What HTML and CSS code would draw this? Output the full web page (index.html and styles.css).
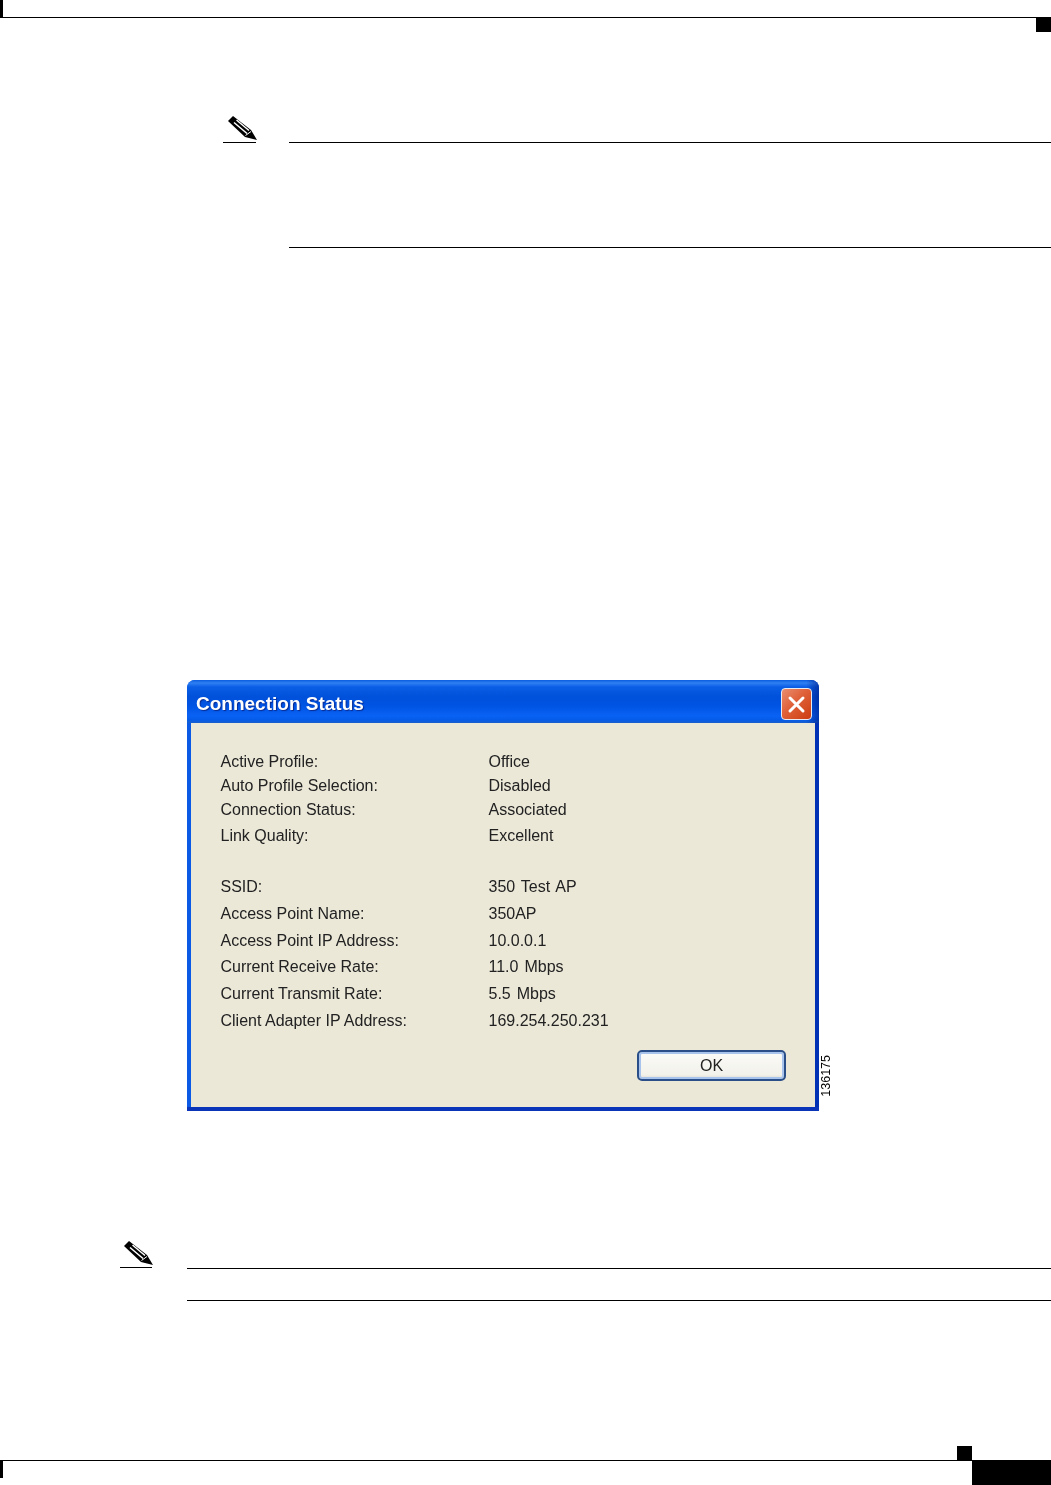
FILE: index.html
```html
<!DOCTYPE html>
<html lang="en">
<head>
<meta charset="utf-8">
<title>Connection Status</title>
<link rel="stylesheet" href="styles.css">
</head>
<body>
<div class="page">
  <header class="head">
    <div class="head-line"></div>
    <div class="head-square"></div>
  </header>

  <section class="note note-first">
    <div class="note-icon">
      <svg class="pencil" width="30" height="25" viewBox="0 0 30 25"><polygon points="0,5 5,0 23,14 29,24 17,21" fill="#000"/><path d="M6 6.500 L19 17.500 M8.500 4 L21 14.500" stroke="#fff" stroke-width="1.500" fill="none"/><path d="M17.500 19.500 L23 15.500" stroke="#fff" stroke-width="1" fill="none"/></svg>
    </div>
    <div class="note-body note-body-tall"></div>
  </section>

  <section class="figure">
    <div class="window">
      <div class="titlebar">
        <span class="title">Connection Status</span>
        <span class="close"><svg width="19" height="19" viewBox="0 0 19 19"><path d="M3 3 L16 16 M16 3 L3 16" stroke="#fff" stroke-width="3" stroke-linecap="round"/></svg></span>
      </div>
      <div class="client">
        <dl class="rows">
          <div class="row"><dt>Active Profile:</dt><dd>Office</dd></div>
          <div class="row"><dt>Auto Profile Selection:</dt><dd>Disabled</dd></div>
          <div class="row"><dt>Connection Status:</dt><dd>Associated</dd></div>
          <div class="row r4"><dt>Link Quality:</dt><dd>Excellent</dd></div>
          <div class="row r5"><dt>SSID:</dt><dd>350 Test AP</dd></div>
          <div class="row r6"><dt>Access Point Name:</dt><dd>350AP</dd></div>
          <div class="row r6"><dt>Access Point IP Address:</dt><dd>10.0.0.1</dd></div>
          <div class="row r4"><dt>Current Receive Rate:</dt><dd>11.0 Mbps</dd></div>
          <div class="row r6"><dt>Current Transmit Rate:</dt><dd>5.5 Mbps</dd></div>
          <div class="row r6"><dt>Client Adapter IP Address:</dt><dd>169.254.250.231</dd></div>
        </dl>
        <div class="actions"><button class="ok" type="button">OK</button></div>
      </div>
    </div>
    <div class="fig-number">136175</div>
  </section>

  <section class="note note-second">
    <div class="note-icon note-icon-second">
      <svg class="pencil" width="30" height="25" viewBox="0 0 30 25"><polygon points="0,5 5,0 23,14 29,24 17,21" fill="#000"/><path d="M6 6.500 L19 17.500 M8.500 4 L21 14.500" stroke="#fff" stroke-width="1.500" fill="none"/><path d="M17.500 19.500 L23 15.500" stroke="#fff" stroke-width="1" fill="none"/></svg>
    </div>
    <div class="note-body note-body-short"></div>
  </section>

  <footer class="foot">
    <div class="foot-square"></div>
    <div class="foot-bar">
      <div class="foot-line"></div>
      <div class="foot-block"></div>
    </div>
  </footer>
</div>
</body>
</html>
```

FILE: styles.css
```css
* { box-sizing: border-box; }
html, body { margin: 0; padding: 0; background: #fff; }
.page {
  width: 1051px;
  height: 1485px;
  overflow: hidden;
  display: flex;
  flex-direction: column;
  font-family: "Liberation Sans", Arial, sans-serif;
}

.head-line { height: 18px; border-bottom: 1px solid #000; border-left: 3px solid #000; }
.head-square { width: 15px; height: 14px; background: #000; margin-left: auto; }

.note { display: flex; align-items: flex-start; }
.note-first { margin-top: 83px; padding-left: 223px; }
.note-second { margin-top: 130px; padding-left: 120px; }

.note-icon {
  width: 33px;
  height: 28px;
  padding-left: 5px;
  padding-top: 1px;
  border-bottom: 1px solid #000;
  flex: none;
}
.note-icon-second { width: 32px; height: 27px; padding-left: 4px; padding-top: 0; }
.pencil { display: block; }

.note-body { flex: 1; border-top: 1px solid #000; border-bottom: 1px solid #000; }
.note-body-tall { margin-top: 27px; margin-left: 33px; height: 106px; }
.note-body-short { margin-top: 27px; margin-left: 35px; height: 33px; }

.figure { display: flex; align-items: flex-end; margin-top: 432px; padding-left: 187px; }

.window {
  width: 632px;
  height: 431px;
  display: flex;
  flex-direction: column;
  border-radius: 8px 8px 0 0;
  background: linear-gradient(90deg, #0a5ae6 0, #0050dc 50%, #0030b4 100%);
  padding: 0 4px;
  border-bottom: 4px solid #0a35b8;
  overflow: hidden;
  flex: none;
  filter: blur(0.35px);
}
.titlebar {
  height: 43px;
  flex: none;
  margin: 0 -4px;
  padding: 0 7px 0 9px;
  display: flex;
  align-items: center;
  justify-content: space-between;
  background:
    linear-gradient(90deg, transparent 98%, rgba(0, 20, 120, 0.55) 100%),
    linear-gradient(180deg, #0a5ce0 0, #2f80f2 3px, #0a5ee6 7px, #0050da 17px, #0054e4 26px, #0a62f4 36px, #055be8 40px, #1a60cc 43px);
}
.title {
  color: #fff;
  font-size: 19px;
  font-weight: 700;
  margin-top: 5px;
  text-shadow: 1px 1px 1px #0a2a90;
}
.close {
  width: 31px;
  height: 32px;
  margin-top: 5px;
  border: 1.500px solid #e8eaf2;
  border-radius: 4px;
  background: linear-gradient(135deg, #ea8e70 0, #df6038 45%, #cc3c10 100%);
  display: flex;
  align-items: center;
  justify-content: center;
}
.client {
  flex: 1;
  background: #ebe8d8;
  display: flex;
  flex-direction: column;
  padding: 26px 29px 26px 29.500px;
}

.rows { margin: 1px 0 0; color: #222; font-size: 16px; line-height: 24px; }
.row { display: grid; grid-template-columns: 268px 1fr; }
.row dt, .row dd { margin: 0; }
.row dd { word-spacing: 1.500px; }
.r4 { margin-top: 2px; }
.r5 { margin-top: 27px; }
.r6 { margin-top: 3px; }

.actions { margin-top: auto; display: flex; justify-content: flex-end; }
.ok {
  width: 149px;
  height: 31px;
  padding: 1px 0 0;
  border: 2px solid #2a4f88;
  border-radius: 5px;
  background: linear-gradient(180deg, #fbfbf8 0, #f2f1ea 85%, #dcd9cc 100%);
  box-shadow: inset 0 0 0 2px #a8c4ec;
  color: #222;
  font-family: "Liberation Sans", Arial, sans-serif;
  font-size: 16px;
}
.fig-number {
  writing-mode: vertical-rl;
  transform: rotate(180deg);
  font-size: 12.500px;
  line-height: 14px;
  margin-bottom: 14px;
  color: #000;
}

.foot { margin-top: auto; }
.foot-square { width: 15px; height: 14px; background: #000; margin-left: 957px; }
.foot-bar { display: flex; height: 25px; align-items: flex-start; }
.foot-line { width: 972px; height: 18px; border-top: 1px solid #000; border-left: 3px solid #000; }
.foot-block { flex: 1; height: 25px; background: #000; }
```
